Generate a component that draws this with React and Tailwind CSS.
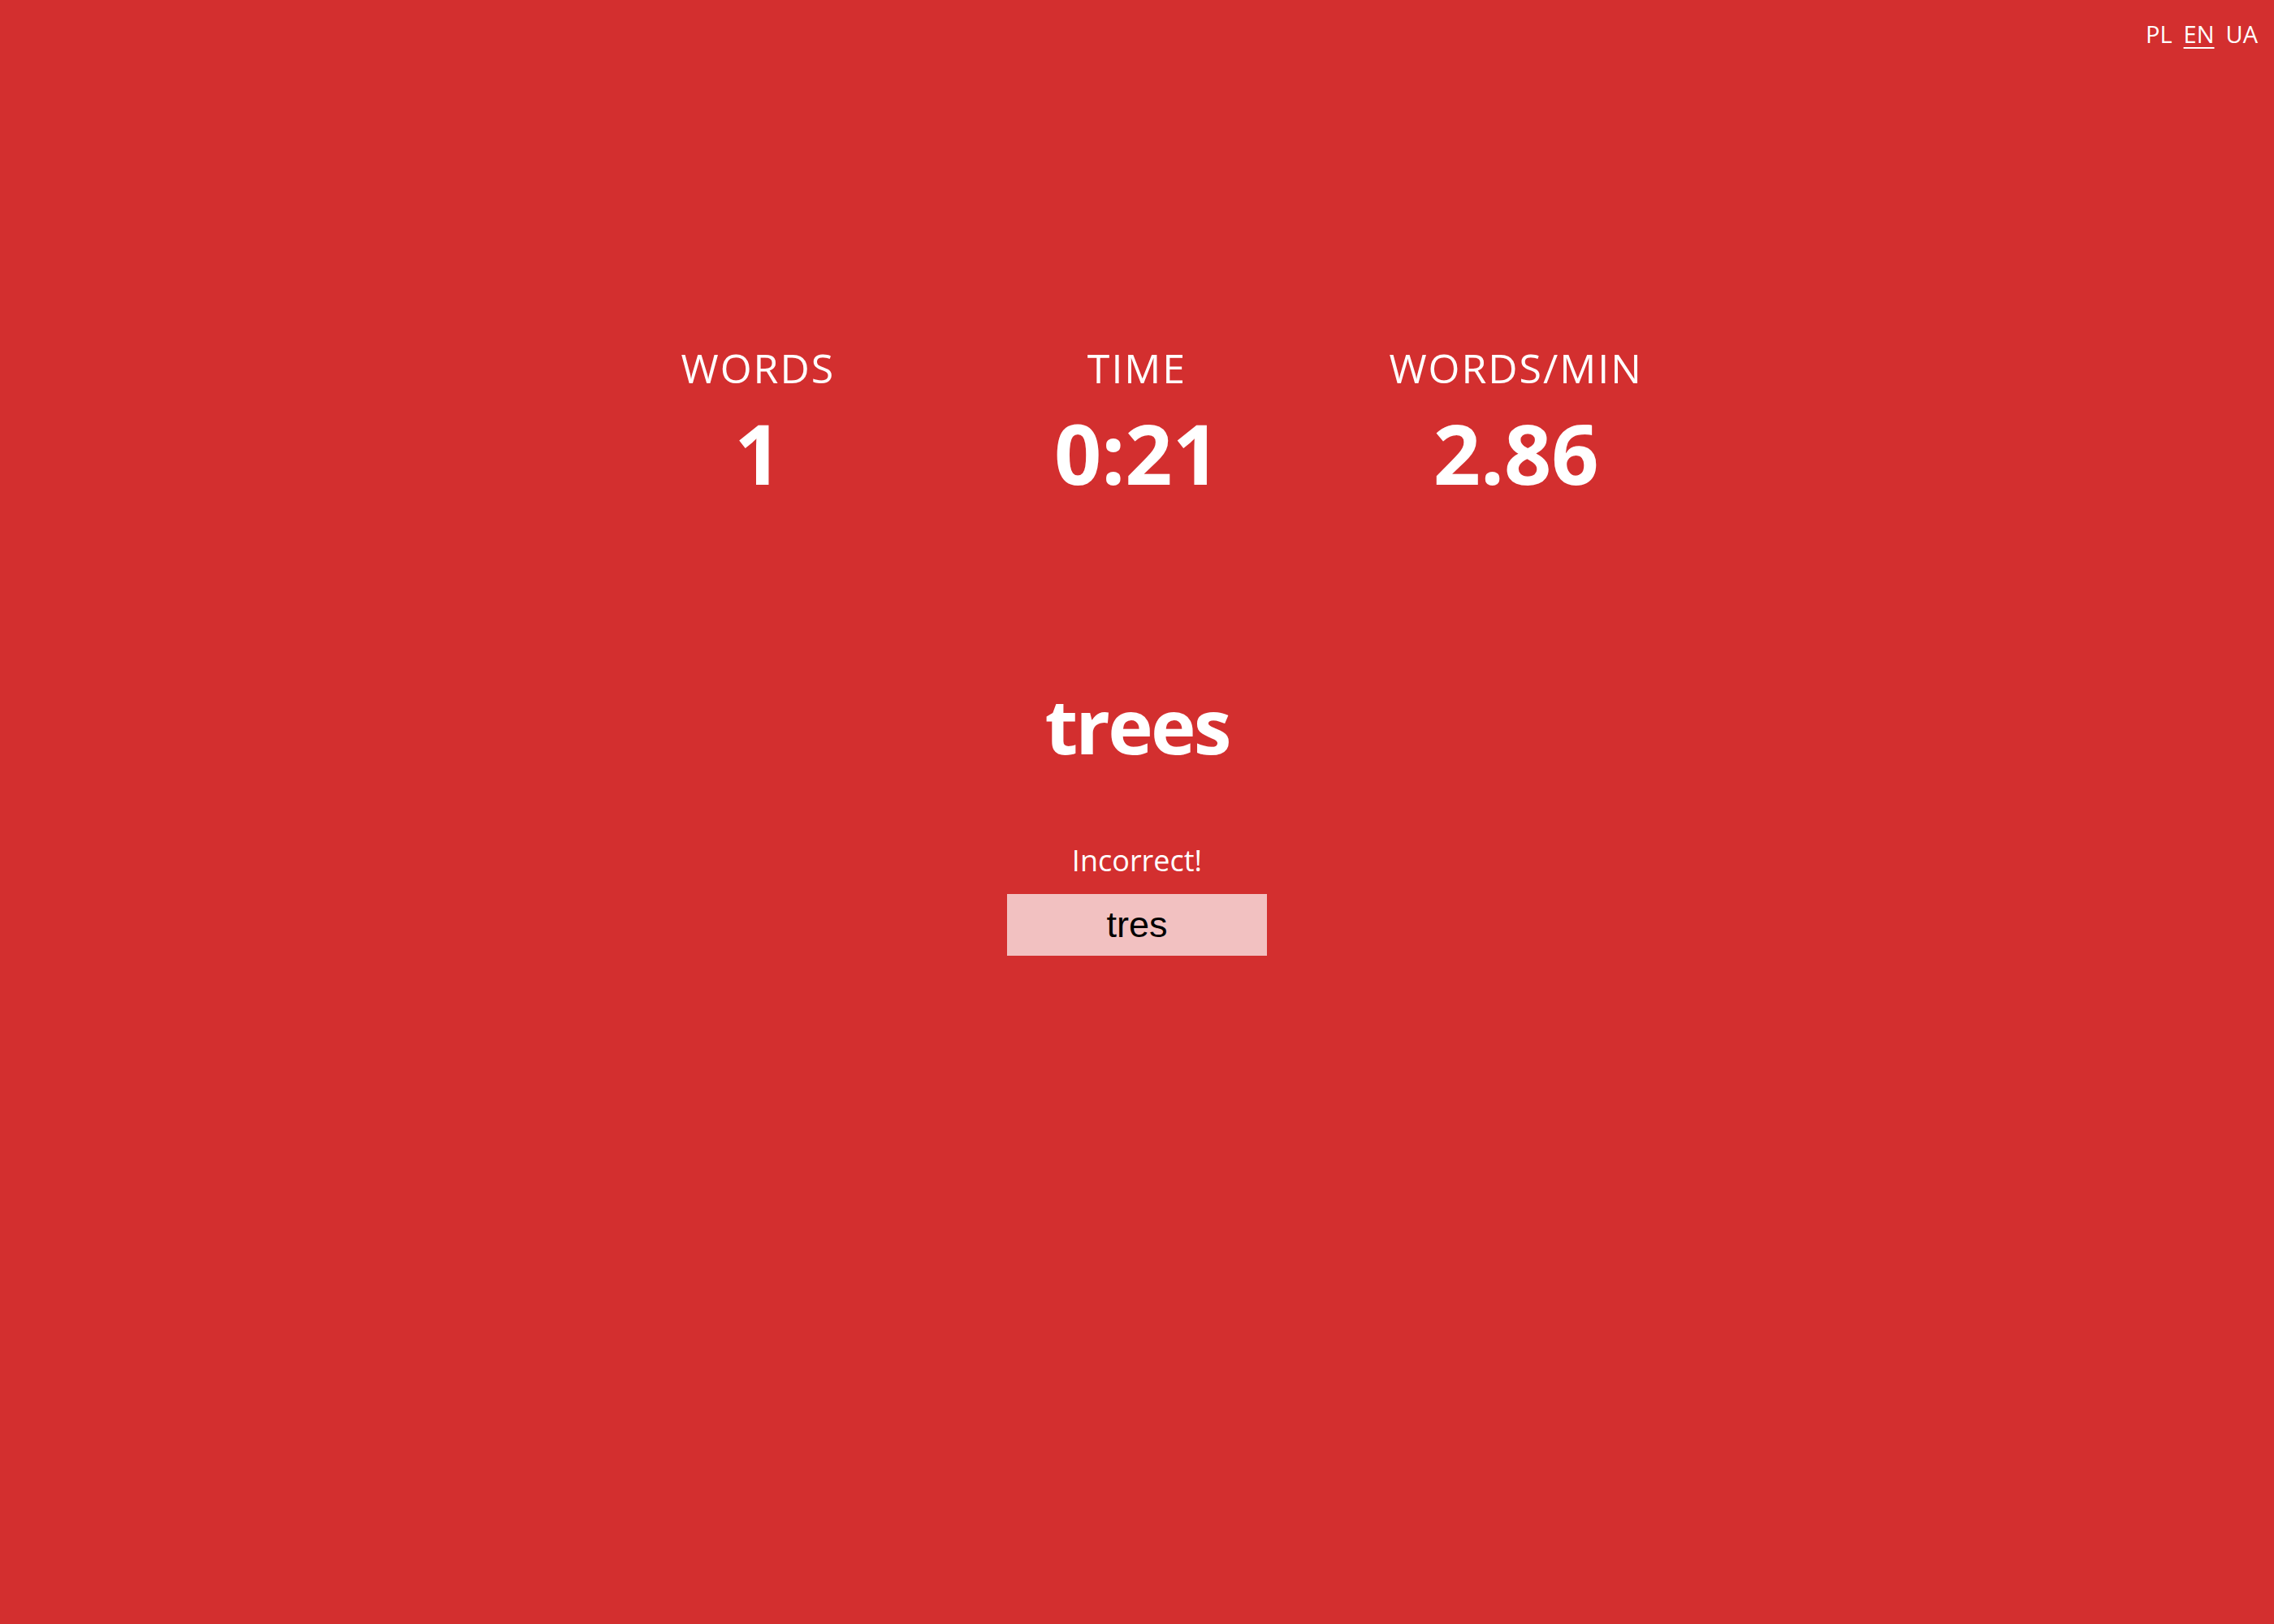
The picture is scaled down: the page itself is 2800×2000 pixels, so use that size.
const stats = [
  { label: 'WORDS', value: '1' },
  { label: 'TIME', value: '0:21' },
  { label: 'WORDS/MIN', value: '2.86' },
];

const langs = ['PL', 'EN', 'UA'];

export default function App() {
  return (
    <div className="min-h-screen bg-[#d32f2f] text-white font-['Open_Sans','Noto_Sans',sans-serif]">
      <div className="flex justify-end gap-[14px] pt-[27px] pr-[20px] text-[29px] leading-none">
        {langs.map((l) => (
          <span key={l} className={l === 'EN' ? 'underline underline-offset-[5px] decoration-[1.5px]' : ''}>
            {l}
          </span>
        ))}
      </div>

      <div className="mx-auto mt-[372px] grid w-[1400px] grid-cols-3 text-center">
        {stats.map((s) => (
          <div key={s.label} className="flex flex-col items-center">
            <div className="text-[50px] leading-none tracking-[0.04em]">{s.label}</div>
            <div className="mt-[29px] text-[102px] font-bold leading-none">{s.value}</div>
          </div>
        ))}
      </div>

      <div className="mt-[237px] flex flex-col items-center">
        <h1 className="text-[94px] font-bold leading-none tracking-[-0.03em]">trees</h1>
        <p className="mt-[102px] text-[36px] leading-none">Incorrect!</p>
        <input
          type="text"
          defaultValue="tres"
          className="mt-[23px] h-[76px] w-[320px] bg-white/70 text-center text-[45px] text-black outline-none font-['Liberation_Sans',Arial,sans-serif]"
        />
      </div>
    </div>
  );
}
